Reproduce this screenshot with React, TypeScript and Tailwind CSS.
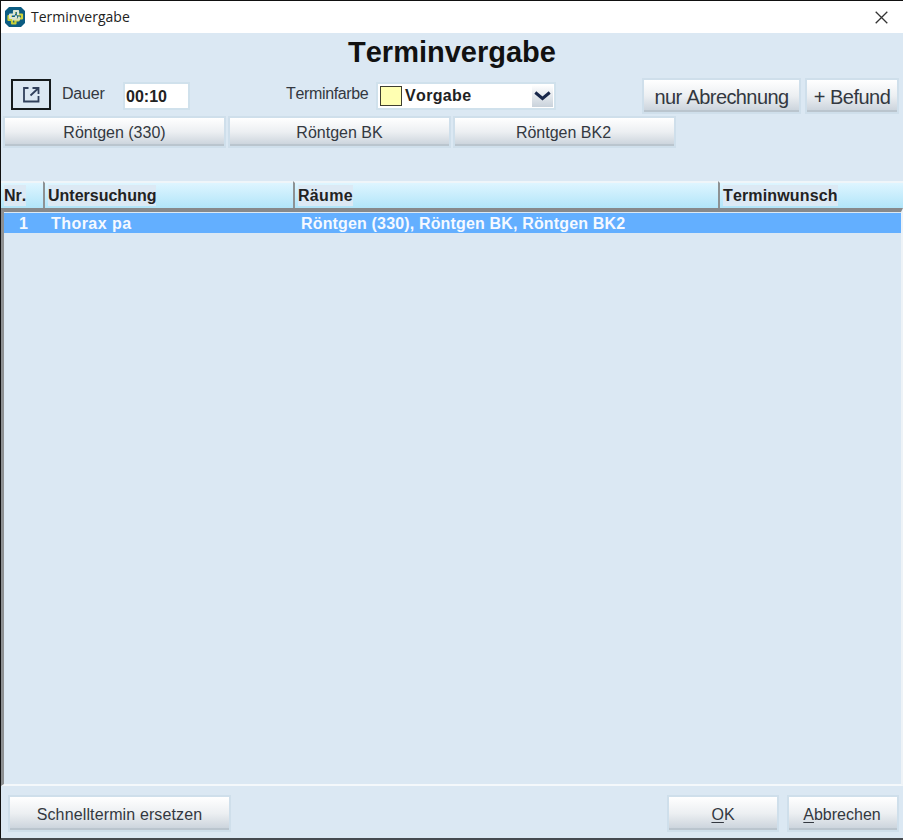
import React from "react";

const face =
  "border-2 border-[#cfdfeb] shadow-[inset_0_-2px_0_#bac5ce] bg-linear-to-b from-white via-[#eceff2] to-[#c8d1da] text-[#333840] flex items-center justify-center whitespace-nowrap shrink-0";

function Button({ className, children }: { className: string; children: React.ReactNode }) {
  return <button className={`${face} ${className}`}>{children}</button>;
}

function HeaderCell({ className, label, labelClass = "" }: { className: string; label: string; labelClass?: string }) {
  return (
    <div className={`flex h-[27px] items-center border-t-2 border-[#eff5f9] bg-linear-to-b from-[#def5ff] to-[#b1e5f9] ${className}`}>
      <span className={`h-[21px] bg-[#dce9f4] leading-[22px] ${labelClass}`}>{label}</span>
    </div>
  );
}

function Logo() {
  return (
    <svg width="20" height="20" viewBox="0 0 20 20" className="shrink-0">
      <path d="M4 0H16L20 4V16L16 20H4L0 16V4Z" fill="#0b5c82" />
      <g fill="none" strokeWidth="2.2" strokeLinejoin="round">
        <path d="M9.500 7V4H13V7.500H17V11.500H13.500V13.500H9.500" stroke="#d0d43c" />
        <path d="M10.500 13V16.500H7V13H3.500V9H7" stroke="#c6cf38" />
        <path d="M13 8V4H9V7.500H5V11H11V8.500" stroke="#dce6d8" />
        <path d="M7 12.500H14V9.500" stroke="#d9e2bd" />
      </g>
    </svg>
  );
}

export default function App() {
  return (
    <div className="flex h-[840px] w-[903px] flex-col overflow-hidden border-b-2 border-l border-t border-b-[#454a4f] border-l-[#111] border-t-[#111] bg-[#dbe8f3] font-['Liberation_Sans',Arial,sans-serif] text-[16px] text-[#222] [font-kerning:none]">
      <div className="flex h-[32px] shrink-0 items-center bg-white pl-[4px] pr-[15px]">
        <Logo />
        <span className="ml-[6px] font-['Open_Sans','Noto_Sans',sans-serif] text-[14px] leading-[30px] text-[#222]">Terminvergabe</span>
        <svg width="13" height="13" viewBox="0 0 13 13" className="ml-auto" fill="none" stroke="#333" strokeWidth="1.3">
          <path d="M.7.7l11.6 11.6M12.3.7L.7 12.3" />
        </svg>
      </div>

      <h1 className="h-[45px] shrink-0 text-center text-[29px] font-bold leading-[38px] text-[#111]">Terminvergabe</h1>

      <div className="flex h-[37px] shrink-0 items-start">
        <button className="ml-[10px] mt-px flex h-[31px] w-[40px] items-center justify-center border-2 border-[#161b1d]">
          <svg width="19" height="18" viewBox="0 0 19 18" fill="none" stroke="#30405c" strokeWidth="1.8">
            <path d="M6.500 2H2v13.500h14.500v-5.500" />
            <path d="M8.500 9.500L16 2.500M10.500 2H16.500v6" />
          </svg>
        </button>
        <span className="ml-[11px] w-[61px] text-[16px] leading-[31px] tracking-[-0.2px] text-[#333840]">Dauer</span>
        <div className="mt-[4px] h-[28px] w-[67px] border-2 border-[#d0e1ec] bg-white pl-px font-bold leading-[25px]">00:10</div>
        <span className="ml-[96px] w-[90px] text-[16px] leading-[31px] tracking-[-0.35px] text-[#333840]">Terminfarbe</span>
        <div className="mt-[4px] flex h-[28px] w-[180px] items-center border-2 border-[#d0e1ec] bg-white">
          <div className="ml-[2px] h-[20px] w-[22px] border border-[#3f3f30] bg-[#ffffb2]" />
          <span className="ml-[3px] font-bold leading-[24px] tracking-[0.35px]">Vorgabe</span>
          <div className="ml-auto mr-px flex h-[22px] w-[21px] items-center justify-center bg-linear-to-b from-white to-[#c9d2db]">
            <svg width="17" height="10" viewBox="0 0 17 10" fill="none" stroke="#18274a" strokeWidth="3">
              <path d="M1.3 1.5L8.5 7.5L15.7 1.5" />
            </svg>
          </div>
        </div>
        <Button className="ml-[86px] h-[36px] w-[159px] pt-px text-[20px] tracking-[-0.6px]">nur Abrechnung</Button>
        <Button className="ml-[4px] h-[36px] w-[94px] pt-px text-[20px] tracking-[-0.5px]">+ Befund</Button>
      </div>

      <div className="flex h-[66px] shrink-0 gap-[2px] pl-[2px] pt-px">
        <Button className="h-[32px] w-[223px] pt-[2px]">Röntgen (330)</Button>
        <Button className="h-[32px] w-[223px] pt-[2px]">Röntgen BK</Button>
        <Button className="h-[32px] w-[223px] pr-[2px] pt-[2px]">Röntgen BK2</Button>
      </div>

      <div className="flex h-[27px] shrink-0 font-bold text-[#222]">
        <HeaderCell className="w-[42px] pl-[3px]" label="Nr." />
        <HeaderCell className="w-[250px] border-l-2 border-l-[#8d9294] pl-[3px]" label="Untersuchung" />
        <HeaderCell className="w-[425px] border-l-2 border-l-[#8d9294] pl-[3px]" label="Räume" labelClass="tracking-[0.3px]" />
        <HeaderCell className="flex-1 border-l-2 border-l-[#8d9294] pl-[3px]" label="Terminwunsch" labelClass="tracking-[0.15px]" />
      </div>
      <div className="flex-1 border-b-2 border-l-[3px] border-r-2 border-t-4 border-b-[#f4f8fb] border-l-[#8d9092] border-r-[#eef3f7] border-t-[#87898b]">
        <div className="mt-px flex h-[20px] bg-[#63afff] font-bold leading-[22px] text-[#f5f9ff]">
          <span className="w-[47px] pl-[15px]">1</span>
          <span className="w-[250px] tracking-[0.45px]">Thorax pa</span>
          <span className="tracking-[0.16px]">Röntgen (330), Röntgen BK, Röntgen BK2</span>
        </div>
      </div>

      <div className="flex h-[52px] shrink-0 items-start pl-[7px] pt-[9px]">
        <Button className="h-[37px] w-[223px] pt-[2px] tracking-[0.13px]">Schnelltermin ersetzen</Button>
        <Button className="ml-[436px] h-[37px] w-[112px] pt-[2px]"><u className="underline-offset-2">O</u>K</Button>
        <Button className="ml-[8px] h-[37px] w-[112px] pr-[2px] pt-[2px]"><u className="underline-offset-2">A</u>bbrechen</Button>
      </div>
    </div>
  );
}
